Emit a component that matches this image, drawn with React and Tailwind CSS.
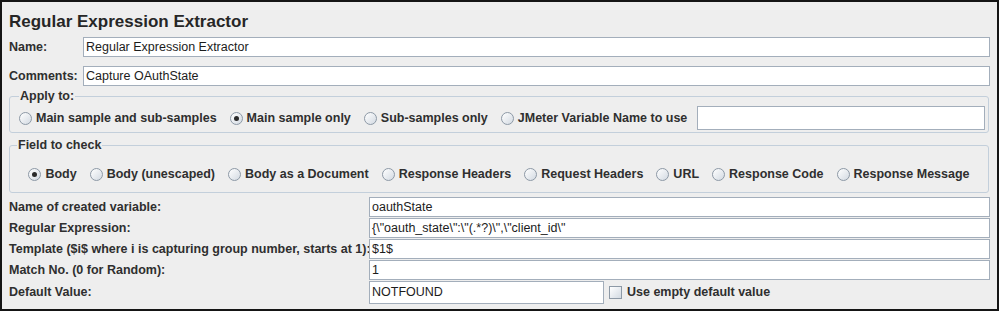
import React from 'react';

const font = { fontFamily: '"Liberation Sans", Arial, sans-serif' };

function Radio({ label, checked }) {
  return (
    <label className="flex items-center gap-[4px] whitespace-nowrap">
      <span className="flex h-[13px] w-[13px] shrink-0 items-center justify-center rounded-full border border-[#8d99a6] bg-linear-to-br from-[#ffffff] to-[#d3dae2]">
        {checked && <span className="h-[5px] w-[5px] rounded-full bg-[#2a2a2a]" />}
      </span>
      <span>{label}</span>
    </label>
  );
}

function Field({ value, className = '' }) {
  return (
    <div
      className={`flex items-center border border-[#a3aebb] bg-white px-[2px] font-normal text-[#1c1c1c] ${className}`}
    >
      {value}
    </div>
  );
}

export default function App() {
  // rows of the settings block below the two fieldsets
  const rows = [
    ['Name of created variable:', 'oauthState'],
    ['Regular Expression:', '{\\"oauth_state\\":\\"(.*?)\\",\\"client_id\\"'],
    ['Template ($i$ where i is capturing group number, starts at 1):', '$1$'],
    ['Match No. (0 for Random):', '1'],
  ];

  return (
    <div className="h-[313px] w-[999px] bg-white" style={font}>
      <div className="flex h-[311px] w-[999px] flex-col border-2 border-[#151515] bg-[#eeeeee] pl-[7px] pr-[7px] text-[12.5px] font-bold text-[#2f2f2f]">
        <h1 className="mt-[10px] h-[20px] text-[17px] leading-[20px] text-[#262626]">
          Regular Expression Extractor
        </h1>

        <div className="mt-[5px] flex h-[20px] items-center">
          <span className="w-[74px]">Name:</span>
          <Field value="Regular Expression Extractor" className="h-[20px] flex-1" />
        </div>
        <div className="mt-[9px] flex h-[20px] items-center">
          <span className="w-[74px]">Comments:</span>
          <Field value="Capture OAuthState" className="h-[20px] flex-1" />
        </div>

        <fieldset className="mt-[3px] mr-[1px] rounded-[3px] border border-[#c3cfdb] pl-[9px] pr-[3px] pb-[2px]">
          <legend className="h-[14px] px-[1px] leading-[14px]">Apply to:</legend>
          <div className="mt-[3px] flex h-[24px] items-center gap-[13px]">
            <Radio label="Main sample and sub-samples" />
            <Radio label="Main sample only" checked />
            <Radio label="Sub-samples only" />
            <Radio label="JMeter Variable Name to use" />
            <Field value="" className="-ml-[3px] h-[24px] flex-1" />
          </div>
        </fieldset>

        <fieldset className="mt-[5px] mr-[1px] rounded-[3px] border border-[#c3cfdb] px-[7px] pb-[8px]">
          <legend className="h-[14px] px-[1px] leading-[14px]">Field to check</legend>
          <div className="mt-[12px] flex h-[20px] items-center justify-center gap-[13px]">
            <Radio label="Body" checked />
            <Radio label="Body (unescaped)" />
            <Radio label="Body as a Document" />
            <Radio label="Response Headers" />
            <Radio label="Request Headers" />
            <Radio label="URL" />
            <Radio label="Response Code" />
            <Radio label="Response Message" />
          </div>
        </fieldset>

        <div className="mt-[4px] grid grid-cols-[360px_1fr] gap-y-[1px]">
          {rows.map(([label, value]) => (
            <React.Fragment key={label}>
              <span className="flex h-[20px] items-center whitespace-nowrap">{label}</span>
              <Field value={value} className="h-[20px]" />
            </React.Fragment>
          ))}
          <span className="flex h-[23px] items-center">Default Value:</span>
          <div className="flex h-[23px] items-center">
            <Field value="NOTFOUND" className="h-[23px] w-[235px]" />
            <label className="ml-[5px] flex items-center gap-[5px]">
              <span className="h-[13px] w-[13px] border border-[#8d99a6] bg-linear-to-br from-[#ffffff] to-[#d3dae2]" />
              <span>Use empty default value</span>
            </label>
          </div>
        </div>
      </div>
    </div>
  );
}
